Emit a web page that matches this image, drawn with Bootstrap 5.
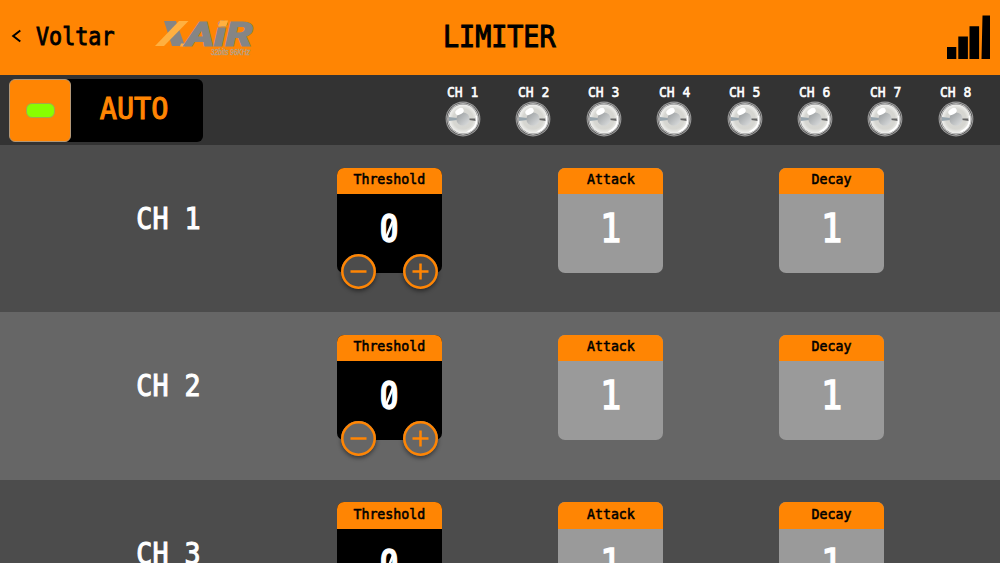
<!DOCTYPE html>
<html lang="pt">
<head>
<meta charset="utf-8">
<meta name="viewport" content="width=device-width, initial-scale=1">
<title>Limiter</title>
<link href="https://cdn.jsdelivr.net/npm/bootstrap@5.3.0/dist/css/bootstrap.min.css" rel="stylesheet">
<style>
:root{--amber:#ff8503}
html,body{height:100%;overflow:hidden}
body{background:#4c4c4c;font-family:"DejaVu Sans Mono",monospace;line-height:1}
.tx{display:inline-block;white-space:pre;transform:scaleX(.905);-webkit-text-stroke:1.1px currentColor}
.topbar{height:75px;background:var(--amber);color:#000;display:grid;grid-template-columns:443px 1fr 53px}
.voltar{font-size:24px;transform-origin:left;margin-top:-2px}
.voltar.tx{-webkit-text-stroke-width:.9px}
.title{font-size:29.5px;transform-origin:left}
.toolbar{height:70px;background:#333;padding:4px 9px 3px}
.auto{width:194px;height:63px;background:#000;border-radius:6px;color:var(--amber);font-size:30px}
.auto .tx{transform:scaleX(.95);margin:-3px 6px 0 0}
.knob{width:62px;height:63px;background:var(--amber);border:1px solid #b39878;border-radius:6px}
.pill{width:29px;height:15px;border-radius:6px;background:#8f0;border:1px solid #a5a94a}
.led{width:70.4px;font-size:14.7px;color:#fff}
.led .tx,.head .tx{transform:scaleX(.89);-webkit-text-stroke-width:.6px}
.strips{height:418px;overflow:hidden}
.strip{height:167.3px;background:#4c4c4c;padding:22.5px 57.5px 0;--fill:#4c4c4c}
.strip.alt{background:#666;--fill:#666}
.cell{width:221.2px}
.chan{font-size:29.5px;color:#fff;padding-top:37.5px}
.box{width:105.5px;height:105.5px;border-radius:7px;background:#9a9a9a;color:#fff}
.box.on{background:#000}
.head{height:26.5px;background:var(--amber);color:#000;border-radius:7px 7px 0 0;font-size:14.9px;padding-top:4.5px}
.num{font-size:39px;padding-top:15px}
.num .tx{-webkit-text-stroke-width:1.4px}
.zero.tx{font-family:Roboto,sans-serif;font-weight:500;transform:scaleX(.82)}
.slash{left:45px;top:45.5px}
.rnd{width:35px;height:35px;bottom:-15.5px;border-radius:50%;background:var(--fill);box-shadow:0 2px 4px #0007}
.minus{left:4.5px}.plus{right:4.5px}
</style>
</head>
<body>
<header class="topbar">
  <div class="d-flex align-items-center">
    <svg width="36" height="75"><path d="M20.3 30.5L13.2 36L20.3 41.5" fill="none" stroke="#000" stroke-width="2"/></svg>
    <span class="tx voltar">Voltar</span>
    <svg width="110" height="55" class="ms-auto flex-shrink-0" style="margin-right:183px" viewBox="0 0 110 55">
      <path d="M14 11H26L35 36H22Z" fill="#858585"/>
      <path d="M29 11H38.5L14 36H5Z" fill="#ffb040"/>
      <path d="M31 33.5h4v3h-5z" fill="#ffb040"/>
      <g fill="#858585" stroke="#858585" stroke-width="1.2" font-family="Roboto,sans-serif" font-weight="900" font-style="italic" font-size="34">
        <text x="36" y="35.7" textLength="67" lengthAdjust="spacingAndGlyphs">AiR</text>
      </g>
      <path d="M70 10.5h8l-1.8 6h-8z" fill="#ffb040"/>
      <text x="61" y="44.5" fill="#b5a184" stroke="#b5a184" stroke-width=".4" font-family="Liberation Sans,sans-serif" font-style="italic" font-size="8.5" textLength="39" lengthAdjust="spacingAndGlyphs">32bits 96KHz</text>
    </svg>
  </div>
  <div class="d-flex align-items-center"><span class="tx title">LIMITER</span></div>
  <svg width="53" height="75"><path d="M0 47h9.3v12H0zM11.3 36.5h9.6V59h-9.6zM22.5 26.2h9.6V59h-9.6zM35.5 15.5H43V59h-8.5z"/></svg>
</header>
<section class="toolbar d-flex justify-content-between">
  <div class="auto d-flex">
    <div class="knob d-flex align-items-center justify-content-center"><div class="pill"></div></div>
    <div class="flex-fill d-flex align-items-center justify-content-center"><span class="tx">AUTO</span></div>
  </div>
  <div class="d-flex" id="leds"></div>
</section>
<main id="strips" class="strips"></main>
<svg width="0" height="0" class="position-absolute">
  <defs>
    <radialGradient id="glass"><stop offset="0" stop-color="#d5d5d3"/><stop offset=".7" stop-color="#d6d6d1"/><stop offset="1" stop-color="#f1f1ef"/></radialGradient>
    <linearGradient id="ball" x2="1" y2="1"><stop offset="0" stop-color="#969a9c"/><stop offset="1" stop-color="#dfe1e2"/></linearGradient>
    <symbol id="lamp" viewBox="0 0 36 36">
      <circle cx="18" cy="18" r="17.4" fill="#999"/>
      <circle cx="18" cy="18" r="16.3" fill="#444"/>
      <circle cx="18" cy="18" r="15.7" fill="#ddd"/>
      <circle cx="18" cy="18" r="14.9" fill="#777"/>
      <circle cx="18" cy="18" r="14.4" fill="url(#glass)"/>
      <path d="M4 16l8 1v2l-8 1z" fill="#98a5ad"/>
      <path d="M24 17.5h6v-1.5l1 4-7-1z" fill="#666"/>
      <path d="M31.5 15v6c-1 5-4 8-9 10" fill="none" stroke="#fff" stroke-width="1.8"/>
      <circle cx="18" cy="18" r="6.6" fill="url(#ball)"/>
      <ellipse cx="14.5" cy="10.5" rx="4.5" ry="3" fill="#fff" transform="rotate(-30 14.5 10.5)"/>
    </symbol>
  </defs>
</svg>
<script>
document.getElementById('leds').innerHTML=[1,2,3,4,5,6,7,8].map(n=>
 `<div class="led d-flex flex-column align-items-center"><span class="tx" style="margin-top:6px">CH ${n}</span><svg width="36" height="36" style="margin-top:1px"><use href="#lamp"/></svg></div>`).join('');
const rnd=(cls,d)=>`<div class="rnd ${cls} position-absolute"><svg class="d-block" width="35" height="35" fill="none" stroke="#ff8503" stroke-width="2.5"><circle cx="17.5" cy="17.5" r="16.2"/><path d="${d}"/></svg></div>`;
const box=(name,v,on)=>`<div class="cell d-flex justify-content-center"><div class="box position-relative text-center ${on?'on':''}">
 <div class="head"><span class="tx">${name}</span></div><div class="num"><span class="tx ${on?'zero':''}">${v}</span></div>
 ${on?`<svg class="slash position-absolute" width="16" height="30"><path d="M4 25L12 5" stroke="#fff" stroke-width="2.4"/></svg>
 ${rnd('minus','M9.5 17.5H25.5')}${rnd('plus','M9.5 17.5H25.5M17.5 9.5V25.5')}`:''}</div></div>`;
document.getElementById('strips').innerHTML=[1,2,3].map(n=>
 `<section class="strip d-flex align-items-start ${n%2?'':'alt'}"><div class="cell chan text-center"><span class="tx">CH ${n}</span></div>${box('Threshold',0,1)}${box('Attack',1)}${box('Decay',1)}</section>`).join('');
</script>
<script src="https://cdn.jsdelivr.net/npm/bootstrap@5.3.0/dist/js/bootstrap.bundle.min.js"></script>
</body>
</html>
